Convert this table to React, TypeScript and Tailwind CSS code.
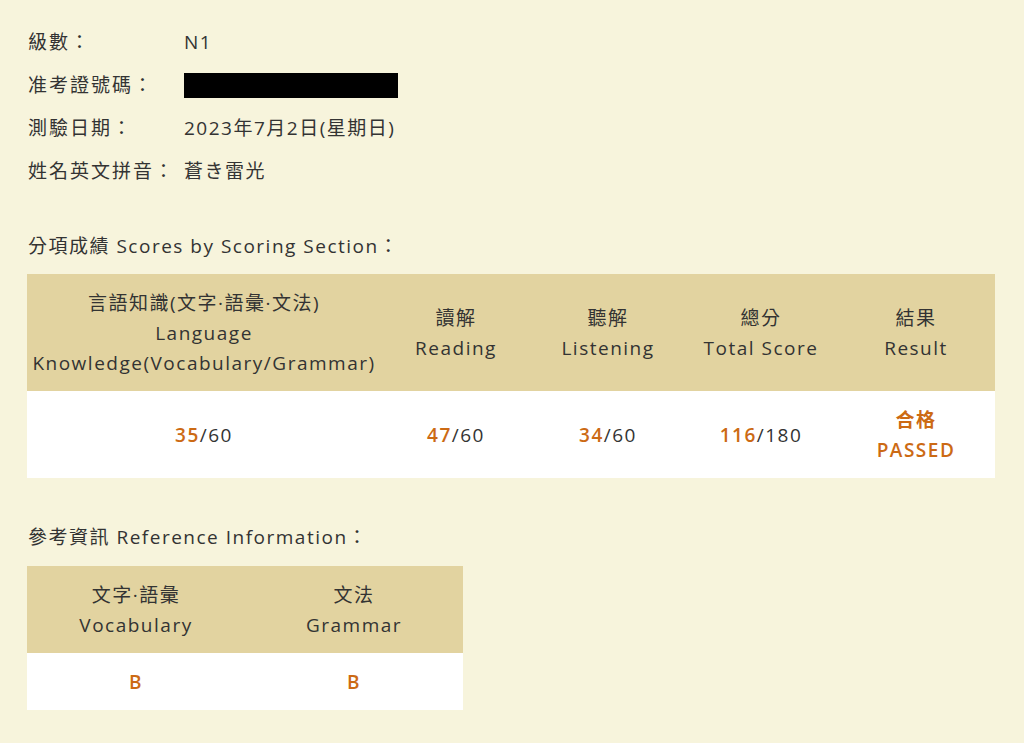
import React from 'react';

const font = "font-['Open_Sans','Noto_Sans_CJK_TC',sans-serif]";

const info = [
  { label: '級數：', value: 'N1' },
  { label: '准考證號碼：', value: null },
  { label: '測驗日期：', value: '2023年7月2日(星期日)' },
  { label: '姓名英文拼音：', value: '蒼き雷光' },
];

const scores = [
  { zh: '言語知識(文字·語彙·文法)', en: ['Language', 'Knowledge(Vocabulary/Grammar)'], score: '35', max: '60', w: 'w-[354px]' },
  { zh: '讀解', en: ['Reading'], score: '47', max: '60', w: 'w-[150px]' },
  { zh: '聽解', en: ['Listening'], score: '34', max: '60', w: 'w-[154px]' },
  { zh: '總分', en: ['Total Score'], score: '116', max: '180', w: 'w-[152px]' },
];

export default function App() {
  return (
    <div className={`min-h-screen bg-[#f7f4dc] text-[#333333] ${font} text-[19px] tracking-[1.5px] px-[28px] pt-[21px]`}>
      <div className="flex flex-col">
        {info.map((row) => (
          <div key={row.label} className="flex items-center h-[43px]">
            <span className="w-[156px] shrink-0 tracking-[2px]">{row.label}</span>
            {row.value ? (
              <span>{row.value}</span>
            ) : (
              <span className="block w-[214px] h-[25px] bg-black" />
            )}
          </div>
        ))}
      </div>

      <h2 className="mt-[38px] mb-[13px] leading-[30px]">分項成績 Scores by Scoring Section：</h2>
      <table className="w-[968px] -ml-px border-collapse text-center leading-[30px]">
        <thead>
          <tr className="bg-[#e2d3a0]">
            {scores.map((s) => (
              <th key={s.zh} className={`${s.w} font-normal py-[13.5px] px-[4px]`}>
                <div>{s.zh}</div>
                {s.en.map((e) => (
                  <div key={e}>{e}</div>
                ))}
              </th>
            ))}
            <th className="font-normal py-[13.5px] px-[4px]">
              <div>結果</div>
              <div>Result</div>
            </th>
          </tr>
        </thead>
        <tbody>
          <tr className="bg-white">
            {scores.map((s) => (
              <td key={s.zh} className="py-[13.5px] px-[4px]">
                <span className="text-[#cc6a14] font-semibold">{s.score}</span>/{s.max}
              </td>
            ))}
            <td className="py-[13.5px] px-[4px] text-[#cc6a14] font-semibold">
              <div>合格</div>
              <div>PASSED</div>
            </td>
          </tr>
        </tbody>
      </table>

      <h2 className="mt-[44px] mb-[14px] leading-[30px]">參考資訊 Reference Information：</h2>
      <table className="w-[436px] -ml-px border-collapse text-center leading-[30px]">
        <thead>
          <tr className="bg-[#e2d3a0]">
            <th className="w-[218px] font-normal py-[13.5px]">
              <div>文字·語彙</div>
              <div>Vocabulary</div>
            </th>
            <th className="w-[218px] font-normal py-[13.5px]">
              <div>文法</div>
              <div>Grammar</div>
            </th>
          </tr>
        </thead>
        <tbody>
          <tr className="bg-white">
            <td className="py-[13.5px] text-[#cc6a14] font-semibold">B</td>
            <td className="py-[13.5px] text-[#cc6a14] font-semibold">B</td>
          </tr>
        </tbody>
      </table>
    </div>
  );
}
